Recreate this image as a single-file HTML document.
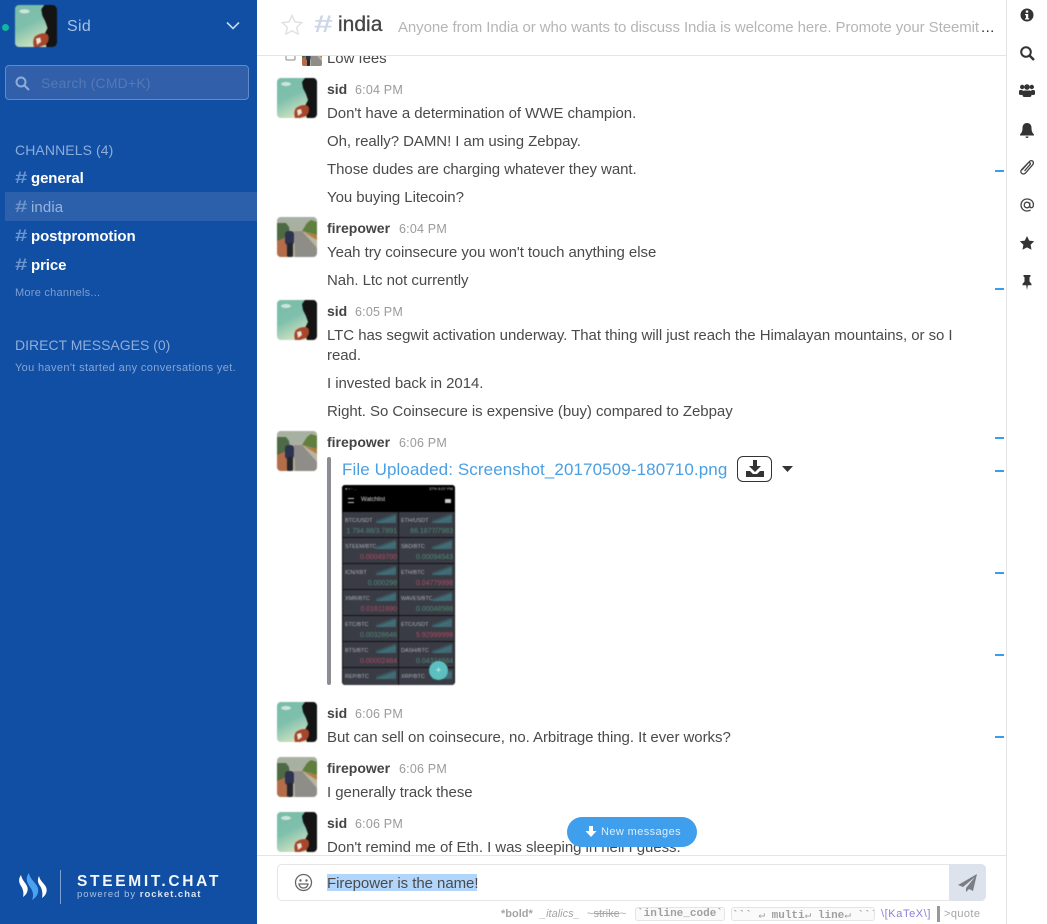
<!DOCTYPE html>
<html><head><meta charset="utf-8"><style>
*{box-sizing:border-box}
html,body{margin:0;padding:0;width:1047px;height:924px;overflow:hidden;background:#fff;font-family:"Liberation Sans",sans-serif}
.a{position:absolute;white-space:nowrap}
#side{position:absolute;left:0;top:0;width:257px;height:924px;background:#104fa3;overflow:hidden}
.ch{position:absolute;left:31px;font-size:15px;font-weight:bold;color:#fff;letter-spacing:-.1px}
.hs{position:absolute;left:15px;font-size:17px;font-weight:bold;color:#6d94cc;transform:scale(1.3,1);transform-origin:left top}
.t{position:absolute;left:327px;font-size:15px;color:#4a4a4a;letter-spacing:-.05px;white-space:nowrap;line-height:20px}
.u{position:absolute;left:327px;font-size:14px;font-weight:bold;color:#444;white-space:nowrap;line-height:18px}
.tm{position:absolute;font-size:12.5px;color:#9a9a9a;white-space:nowrap;line-height:18px;letter-spacing:.2px}
.av{position:absolute;left:277px;width:40px;height:40px;border-radius:4px;overflow:hidden;filter:blur(.4px)}
.d{position:absolute;left:995px;width:9px;height:2px;background:#3b9ce8}
.ic{position:absolute;left:1019px;width:16px;height:16px}
#shot{position:absolute;left:342px;top:485px;width:113px;height:200px;background:#111;border-radius:3px;overflow:hidden;filter:blur(.45px)}
.c{position:absolute;width:55px;height:25px;background:#3a3c45;color:#aeb1b8;font-size:5.5px;line-height:6px;padding:6px 0 0 2px;overflow:hidden}
.c b{position:absolute;right:1px;bottom:1px;font-weight:normal;font-size:7px;line-height:8px}
.c i{position:absolute;right:2px;top:2px;width:20px;height:9px;background:linear-gradient(160deg,#3a3c45 35%,#3f7078 60%,#46626e)}
.hint{position:absolute;top:907px;font-size:11px;color:#a5a5a5;white-space:nowrap;line-height:14px}
.code{position:absolute;top:907px;height:14px;border:1px solid #e4e4e4;border-radius:3px;background:#fafafa;font:bold 11px/13px "Liberation Mono",monospace;color:#a0a0a0;text-align:center;white-space:nowrap;overflow:hidden}
.code span{font-family:"DejaVu Sans Mono",monospace;font-weight:normal}
</style></head><body>
<svg width="0" height="0" style="position:absolute"><defs>
<linearGradient id="sg" x1="0" y1="0" x2=".5" y2="1"><stop offset="0" stop-color="#79bca8"/><stop offset=".5" stop-color="#7fc0ac"/><stop offset="1" stop-color="#d6e4c2"/></linearGradient>
<symbol id="sid" viewBox="0 0 40 40"><rect width="40" height="40" fill="url(#sg)"/><ellipse cx="9" cy="6" rx="5" ry="2" fill="#e4efe6" opacity=".8"/><path d="M28 0h10l2 3v37H30l-3-10 4-8-2-6-3-6-1-6z" fill="#141414"/><path d="M19 30c4-3 9-4 12-2 2 3 1 8-2 10l-6 2h-5c-1-4-1-7 1-10z" fill="#a8452a"/><path d="M20 32l4-1 1 4-4 3z" fill="#e6e6d8"/></symbol>
<symbol id="fire" viewBox="0 0 40 40"><rect width="40" height="40" fill="#b9b4a0"/><rect width="40" height="13" fill="#a8b0a2"/><path d="M0 6h9l3 4 1 8-6 6H0z" fill="#4d6a44"/><path d="M25 14l5-8 4-3 6 2v13z" fill="#5f7f3f"/><path d="M27 15l13 3v5z" fill="#b87a3c"/><path d="M17 14h8l15 17v9H18z" fill="#8f8d88"/><path d="M0 24l9-4 3 20H0z" fill="#b36d48"/><rect x="8" y="14" width="9" height="14" rx="3" fill="#2c3350"/><rect x="10" y="26" width="6" height="14" rx="2" fill="#26262a"/></symbol>
</defs></svg>

<div id="side">
<div class="a" style="left:2px;top:24px;width:7px;height:7px;border-radius:50%;background:#12b5a0"></div>
<svg class="a" style="left:15px;top:5px;border-radius:4px;filter:blur(.4px)" width="42" height="42"><use href="#sid" width="42" height="42"/></svg>
<div class="a" style="left:67px;top:18px;font-size:16px;color:#a5c0e8;letter-spacing:.3px">Sid</div>
<svg class="a" style="left:226px;top:21px" width="14" height="10" fill="none" stroke="#c4d6f0" stroke-width="1.6"><path d="M1 1.5l6 6 6-6"/></svg>
<div class="a" style="left:5px;top:65px;width:244px;height:35px;background:#315fa9;border:1px solid #5f8bcb;border-radius:4px"></div>
<svg class="a" style="left:15px;top:76px" width="15" height="15" fill="none" stroke="#8fadd9" stroke-width="2"><circle cx="6" cy="6" r="4.5"/><path d="M9.5 9.5L14 14"/></svg>
<div class="a" style="left:41px;top:75px;font-size:14px;color:#5479b6;letter-spacing:.2px">Search (CMD+K)</div>
<div class="a" style="left:15px;top:142px;font-size:14px;color:#8eadda;letter-spacing:.1px">CHANNELS (4)</div>
<div class="a" style="left:5px;top:192px;width:252px;height:29px;background:#2d60aa"></div>
<div class="hs" style="top:168px">#</div><div class="ch" style="top:170px">general</div>
<div class="hs" style="top:197px">#</div><div class="ch" style="top:199px;font-weight:normal;color:#97b3de;letter-spacing:.1px">india</div>
<div class="hs" style="top:226px">#</div><div class="ch" style="top:228px">postpromotion</div>
<div class="hs" style="top:255px">#</div><div class="ch" style="top:257px">price</div>
<div class="a" style="left:15px;top:287px;font-size:11px;color:#7f9fd0;letter-spacing:.25px">More channels...</div>
<div class="a" style="left:15px;top:337px;font-size:14px;color:#8eadda">DIRECT MESSAGES (0)</div>
<div class="a" style="left:15px;top:362px;font-size:11px;color:#86a5d4;letter-spacing:.36px">You haven't started any conversations yet.</div>
<svg class="a" style="left:18px;top:872px" width="30" height="30"><g fill="#fff"><path d="M3 3C0 7 1 11 3 14c2 3 3 7 2 11 3-2 6-6 4-11C7 10 4 8 3 3z"/><path d="M21 4c-2 4-1 7 1 10 2 3 3 7 2 12 3-2 6-6 4-11-2-4-6-6-7-11z"/></g><path d="M11 1C7 6 9 11 12 15c3 4 4 8 2 13 5-3 8-8 5-14-3-5-7-7-8-13z" fill="#4aa3f0"/></svg>
<div class="a" style="left:60px;top:870px;width:1px;height:34px;background:#7fa2d4"></div>
<div class="a" style="left:77px;top:873px;font-size:15.5px;font-weight:bold;color:#f4f7fb;letter-spacing:2.7px;line-height:17px">STEEMIT.CHAT</div>
<div class="a" style="left:77px;top:889px;font-size:9.5px;color:#a9c0e2;letter-spacing:1px;line-height:11px">powered by <b style="color:#dbe5f3">rocket.chat</b></div>
</div>

<!-- messages -->
<svg class="a" style="left:285px;top:52px" width="12" height="10" fill="none" stroke="#888"><rect x="1" y="1" width="9" height="7" rx="1"/></svg>
<svg class="a" style="left:302px;top:46px;border-radius:2px" width="20" height="20"><use href="#fire" width="20" height="20"/></svg>
<div class="t" style="top:49px">Low fees</div>

<svg class="av" style="top:78px"><use href="#sid" width="40" height="40"/></svg>
<div class="u" style="top:80px">sid</div><div class="tm" style="left:355px;top:81px">6:04 PM</div>
<div class="t" style="top:104px">Don't have a determination of WWE champion.</div>
<div class="t" style="top:132px">Oh, really? DAMN! I am using Zebpay.</div>
<div class="t" style="top:160px">Those dudes are charging whatever they want.</div>
<div class="t" style="top:188px">You buying Litecoin?</div>

<svg class="av" style="top:217px"><use href="#fire" width="40" height="40"/></svg>
<div class="u" style="top:219px">firepower</div><div class="tm" style="left:399px;top:220px">6:04 PM</div>
<div class="t" style="top:243px">Yeah try coinsecure you won't touch anything else</div>
<div class="t" style="top:271px">Nah. Ltc not currently</div>

<svg class="av" style="top:300px"><use href="#sid" width="40" height="40"/></svg>
<div class="u" style="top:302px">sid</div><div class="tm" style="left:355px;top:303px">6:05 PM</div>
<div class="t" style="top:326px">LTC has segwit activation underway. That thing will just reach the Himalayan mountains, or so I</div>
<div class="t" style="top:346px">read.</div>
<div class="t" style="top:374px">I invested back in 2014.</div>
<div class="t" style="top:402px">Right. So Coinsecure is expensive (buy) compared to Zebpay</div>

<svg class="av" style="top:431px"><use href="#fire" width="40" height="40"/></svg>
<div class="u" style="top:433px">firepower</div><div class="tm" style="left:399px;top:434px">6:06 PM</div>
<div class="a" style="left:327px;top:457px;width:4px;height:228px;background:#8b8d92;border-radius:2px"></div>
<div class="a" style="left:342px;top:459px;font-size:17px;color:#4a9fe3;letter-spacing:.1px;line-height:21px">File Uploaded: Screenshot_20170509-180710.png</div>
<div class="a" style="left:737px;top:456px;width:35px;height:26px;border:1px solid #333;border-radius:6px;background:#fff"></div>
<svg class="a" style="left:746px;top:460px" width="18" height="17" fill="#333"><path d="M7 0h4v6h4l-6 6-6-6h4z"/><path d="M0 11h4l3 3h4l3-3h4v6H0z"/></svg>
<svg class="a" style="left:782px;top:466px" width="11" height="7" fill="#333"><path d="M0 0h11L5.500 6z"/></svg>

<div id="shot">
<div class="a" style="left:0;top:0;width:113px;height:27px;background:#000"></div>
<div class="a" style="left:3px;top:1px;font-size:4px;color:#bbb">● ▪ ▫ ...</div>
<div class="a" style="right:2px;top:1px;font-size:4px;color:#ccc">37% 6:07 PM</div>
<div class="a" style="left:6px;top:13px;width:6px;height:5px;border-top:1px solid #ccc;border-bottom:1px solid #ccc"></div>
<div class="a" style="left:19px;top:12px;font-size:6px;color:#ddd">Watchlist</div>
<div class="a" style="right:4px;top:14px;width:6px;height:4px;background:#ccc"></div>
<div class="c" style="left:1px;top:27px">BTC/USDT<i></i><b style="color:#4f8a78">1 794.88/3.7891</b></div>
<div class="c" style="left:57px;top:27px">ETH/USDT<i></i><b style="color:#4f8a78">86.1877/7983</b></div>
<div class="c" style="left:1px;top:53px">STEEM/BTC<i></i><b style="color:#b04a62">0.00049700</b></div>
<div class="c" style="left:57px;top:53px">SBD/BTC<i></i><b style="color:#4f8a78">0.00094543</b></div>
<div class="c" style="left:1px;top:79px">ICN/XBT<i></i><b style="color:#4f8a78">0.000298</b></div>
<div class="c" style="left:57px;top:79px">ETH/BTC<i></i><b style="color:#b04a62">0.04779998</b></div>
<div class="c" style="left:1px;top:105px">XMR/BTC<i></i><b style="color:#b04a62">0.01611690</b></div>
<div class="c" style="left:57px;top:105px">WAVES/BTC<i></i><b style="color:#4f8a78">0.00048588</b></div>
<div class="c" style="left:1px;top:131px">ETC/BTC<i></i><b style="color:#4f8a78">0.00328646</b></div>
<div class="c" style="left:57px;top:131px">ETC/USDT<i></i><b style="color:#b04a62">5.92999998</b></div>
<div class="c" style="left:1px;top:157px">BTS/BTC<i></i><b style="color:#b04a62">0.00002484</b></div>
<div class="c" style="left:57px;top:157px">DASH/BTC<i></i><b style="color:#4f8a78">0.04324684</b></div>
<div class="c" style="left:1px;top:183px">REP/BTC<i></i></div>
<div class="c" style="left:57px;top:183px">XRP/BTC<i></i></div>
<div class="a" style="left:87px;top:176px;width:19px;height:19px;border-radius:50%;background:#5cc0c0;color:#e6f5f5;font-size:9px;line-height:19px;text-align:center">+</div>
</div>

<svg class="av" style="top:702px"><use href="#sid" width="40" height="40"/></svg>
<div class="u" style="top:704px">sid</div><div class="tm" style="left:355px;top:705px">6:06 PM</div>
<div class="t" style="top:728px">But can sell on coinsecure, no. Arbitrage thing. It ever works?</div>

<svg class="av" style="top:757px"><use href="#fire" width="40" height="40"/></svg>
<div class="u" style="top:759px">firepower</div><div class="tm" style="left:399px;top:760px">6:06 PM</div>
<div class="t" style="top:783px">I generally track these</div>

<svg class="av" style="top:812px"><use href="#sid" width="40" height="40"/></svg>
<div class="u" style="top:814px">sid</div><div class="tm" style="left:355px;top:815px">6:06 PM</div>
<div class="t" style="top:838px">Don't remind me of Eth. I was sleeping in hell I guess.</div>

<!-- header -->
<div class="a" style="left:257px;top:0;width:749px;height:56px;background:#fff;border-bottom:1px solid #e4e4e4"></div>
<svg class="a" style="left:281px;top:14px" width="22" height="21" fill="none" stroke="#e2e2e2" stroke-width="1.500"><path d="M11 1.500l2.900 6.300 6.800.8-5 4.700 1.300 6.800-6-3.400-6 3.400 1.300-6.800-5-4.700 6.800-.8z"/></svg>
<div class="a" style="left:314px;top:11px;font-size:24px;font-weight:bold;color:#cfd6e6;line-height:28px;transform:scale(1.4,1);transform-origin:left top">#</div>
<div class="a" style="left:338px;top:11px;font-size:21px;color:#444;line-height:28px;-webkit-text-stroke:.3px #444">india</div>
<div class="a" style="left:398px;top:19px;font-size:15px;color:#b5b5b5;letter-spacing:-.08px;line-height:18px;width:583px;overflow:hidden">Anyone from India or who wants to discuss India is welcome here. Promote your Steemit</div>
<div class="a" style="left:981px;top:19px;font-size:15px;color:#333;line-height:18px;letter-spacing:.4px">...</div>

<!-- right bar -->
<div class="a" style="left:1006px;top:0;width:41px;height:924px;background:#fff;border-left:1px solid #e4e4e4"></div>
<div class="d" style="top:170px"></div><div class="d" style="top:288px"></div><div class="d" style="top:437px"></div><div class="d" style="top:470px"></div><div class="d" style="top:572px"></div><div class="d" style="top:654px"></div><div class="d" style="top:736px"></div>

<svg class="ic" style="top:7px" viewBox="0 0 16 16"><circle cx="8" cy="8" r="6.500" fill="#333"/><rect x="6.800" y="3.500" width="2.400" height="2.200" fill="#fff"/><path d="M6 7h3.200v4.200H10.200v1.300H6v-1.300h1V8.300H6z" fill="#fff"/></svg>
<svg class="ic" style="top:45px" viewBox="0 0 16 16" fill="none" stroke="#333" stroke-width="2"><circle cx="7" cy="7" r="4.800"/><path d="M10.500 10.500L15 15" stroke-width="2.400"/></svg>
<svg class="ic" style="top:82px" viewBox="0 0 16 16" fill="#333"><circle cx="3.200" cy="5" r="2.200"/><circle cx="12.800" cy="5" r="2.200"/><circle cx="8" cy="5" r="2.800"/><rect x="0" y="8" width="4" height="5" rx="1.500"/><rect x="12" y="8" width="4" height="5" rx="1.500"/><rect x="3.500" y="8.500" width="9" height="6.500" rx="2"/></svg>
<svg class="ic" style="top:122px" viewBox="0 0 16 16" fill="#333"><path d="M8 1c3 0 4.500 2.200 4.500 5 0 3 .8 4.800 2.500 6.500v1H1v-1C2.700 10.800 3.500 9 3.500 6 3.500 3.200 5 1 8 1z"/><path d="M6.500 14.500h3c0 1-.7 1.500-1.500 1.500s-1.500-.5-1.500-1.500z"/></svg>
<svg class="ic" style="top:159px" viewBox="0 0 16 16" fill="none" stroke="#444" stroke-width="1.300"><path d="M3 11L10.500 2.500c1.300-1.400 3-.8 3.500 0s.7 2-.3 3.200L6.500 14c-1.300 1.300-3 1.200-4 .2s-.8-2.300 0-3.400L9 4c.6-.7 1.500-.7 2-.2s.5 1.200 0 1.800L5.500 12"/></svg>
<svg class="ic" style="top:197px" viewBox="0 0 16 16" fill="none" stroke="#444" stroke-width="1.300"><circle cx="8" cy="8" r="2.800"/><path d="M10.800 5.500v4c0 1.500 2.700 1.800 3.400-.3C15.200 5.500 12.500 2 8 2 4.500 2 2 4.800 2 8s2.500 6 6 6c1.500 0 2.500-.3 3.500-.9"/></svg>
<svg class="ic" style="top:235px" viewBox="0 0 16 16" fill="#333"><path d="M8 1l2.200 4.600 5 .7-3.600 3.500.9 5L8 12.400l-4.500 2.400.9-5L.8 6.300l5-.7z"/></svg>
<svg class="ic" style="top:274px" viewBox="0 0 16 16" fill="#333"><path d="M4.500 1h7v1.500l-1 .7v4.300l2 2.500v1.300H8.800L8 16l-.8-4.700H3.500V10l2-2.500V3.200l-1-.7z"/></svg>

<!-- footer -->
<div class="a" style="left:257px;top:855px;width:749px;height:69px;background:#fff;border-top:1px solid #e4e4e4"></div>
<div class="a" style="left:567px;top:817px;width:130px;height:30px;border-radius:15px;background:#3f9fec"></div>
<svg class="a" style="left:585px;top:826px" width="12" height="11" fill="#fff"><path d="M4 0h4v5h3.500L6 11 .5 5H4z"/></svg>
<div class="a" style="left:601px;top:825px;font-size:11px;color:#dceefc;letter-spacing:.4px;line-height:14px">New messages</div>

<div class="a" style="left:277px;top:864px;width:709px;height:37px;border:1px solid #e6e6e6;border-radius:5px;background:#fff"></div>
<div class="a" style="left:949px;top:864px;width:37px;height:37px;background:#dde3ec;border-radius:0 5px 5px 0"></div>
<svg class="a" style="left:958px;top:874px" width="19" height="18" fill="#7b7f85"><path d="M19 0L0 11l5 2L17 3 8 14v4l3-3 4 2z"/></svg>
<svg class="a" style="left:294px;top:873px" width="19" height="19" fill="none" stroke="#666" stroke-width="1.300"><circle cx="9.500" cy="9.500" r="8"/><circle cx="6.500" cy="7.500" r="1.200" fill="#666" stroke="none"/><circle cx="12.500" cy="7.500" r="1.200" fill="#666" stroke="none"/><path d="M5 11h9c-.5 3-2.500 4-4.500 4S5.500 14 5 11z"/></svg>
<div class="a" style="left:327px;top:874px;width:150px;height:17px;background:#b2d6fb"></div>
<div class="a" style="left:327px;top:874px;font-size:15px;color:#4a4a4a;letter-spacing:-.05px;line-height:20px">Firepower is the name!</div>

<div class="hint" style="left:501px;font-weight:bold">*bold*</div>
<div class="hint" style="left:540px;font-style:italic">_italics_</div>
<div class="hint" style="left:587px">~<s>strike</s>~</div>
<div class="code" style="left:635px;width:90px">&#96;inline_code&#96;</div>
<div class="code" style="left:731px;width:144px">&#96;&#96;&#96; <span>↵</span> multi<span>↵</span> line<span>↵</span> &#96;&#96;&#96;</div>
<div class="hint" style="left:881px;color:#8a80d8;letter-spacing:.6px">\[KaTeX\]</div>
<div class="a" style="left:937px;top:906px;width:3px;height:16px;background:#999"></div>
<div class="hint" style="left:944px;letter-spacing:.4px">&gt;quote</div>
</body></html>
